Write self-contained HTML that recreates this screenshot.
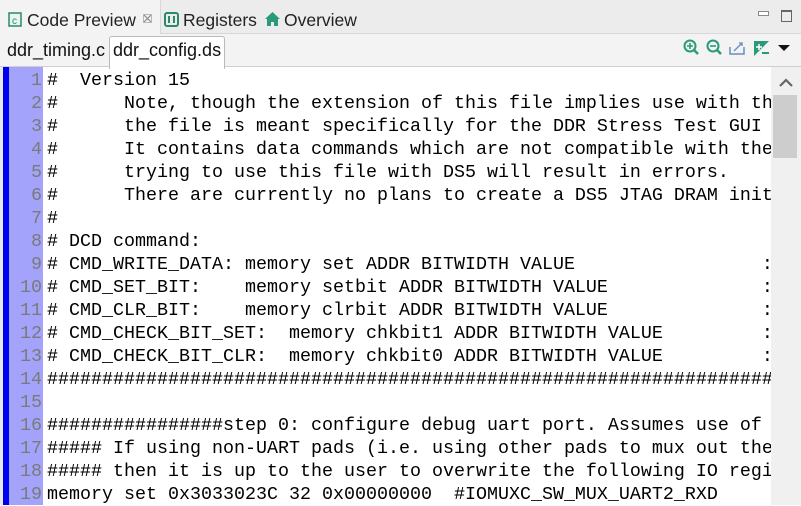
<!DOCTYPE html><html><head><style>
body{margin:0;width:801px;height:505px;overflow:hidden;background:#fff;font-family:"Liberation Sans",sans-serif;position:relative}
.top{position:absolute;left:0;top:0;width:801px;height:34px;background:#ececec;border-bottom:1px solid #d8d8d8;box-sizing:border-box}
.t1{position:absolute;top:0;left:0;height:34px;width:160px;background:#f3f3f3;border-right:1px solid #d8d8d8}
.tab{position:absolute;top:10px;font-size:17.5px;color:#222}
.bar2{position:absolute;left:0;top:34px;width:801px;height:33px;background:#f3f3f3;border-bottom:1px solid #cfcfcf;box-sizing:border-box}
.et{position:absolute;top:40px;font-size:18px;color:#111}
.gut{position:absolute;left:0;top:67px;height:438px;width:43px;background:#a3a3fb}
.gb{position:absolute;left:0;top:67px;height:438px;width:3px;background:#e8e8e8}
.gb2{position:absolute;left:3px;top:67px;height:438px;width:6px;background:#0000f0}
pre{margin:0;position:absolute;top:69px;font-family:"Liberation Mono",monospace;font-size:18.33px;line-height:23px}
.nums{left:0;width:42px;text-align:right;color:#7a7a7a}
.code{left:47px;width:724px;overflow:hidden;color:#000}
.sb{position:absolute;left:771px;top:67px;width:30px;height:438px;background:#f0f0f0}
.th{position:absolute;left:773px;top:95px;width:24px;height:63px;background:#cdcdcd}
</style></head><body>
<div class="top"><div class="t1"></div></div>
<svg style="position:absolute;left:8px;top:12px" width="14" height="15"><rect x="1" y="1" width="12" height="13" fill="#e8f4ef" stroke="#2a8a6a" stroke-width="1.5"/><text x="4" y="12" font-size="10" fill="#2a8a6a" font-family="Liberation Sans">c</text></svg>
<div class="tab" style="left:27px">Code Preview</div>
<svg style="position:absolute;left:143px;top:14px" width="9" height="9"><path d="M1 1l7 7M8 1l-7 7" stroke="#888" stroke-width="1.2"/><rect x="0.5" y="0.5" width="8" height="8" fill="none" stroke="#aaa" stroke-width="0.8"/></svg>
<svg style="position:absolute;left:164px;top:12px" width="15" height="15"><rect x="1" y="1" width="13" height="13" rx="2" fill="none" stroke="#2a8a6a" stroke-width="2"/><line x1="5" y1="4" x2="5" y2="11" stroke="#2a8a6a" stroke-width="2"/><line x1="10" y1="4" x2="10" y2="11" stroke="#2a8a6a" stroke-width="2"/></svg>
<div class="tab" style="left:183px">Registers</div>
<svg style="position:absolute;left:264px;top:11px" width="17" height="16"><path d="M8.5 1L1 8h2v7h4v-4h3v4h4V8h2z" fill="#2a9a7a"/></svg>
<div class="tab" style="left:284px">Overview</div>
<div style="position:absolute;left:758px;top:11px;width:9px;height:3px;border:1px solid #888;background:#fff"></div>
<div style="position:absolute;left:781px;top:10px;width:9px;height:9px;border:1px solid #666;border-top-width:2px"></div>
<div class="bar2"></div>
<div style="position:absolute;left:109px;top:36px;width:114px;height:32px;background:#fff;border:1px solid #bbb;border-bottom:none;border-radius:3px 3px 0 0"></div>
<div class="et" style="left:7px">ddr_timing.c</div>
<div class="et" style="left:113px">ddr_config.ds</div>
<svg style="position:absolute;left:682px;top:39px" width="118" height="18"><circle cx="8" cy="7" r="5.5" fill="none" stroke="#2a9a7a" stroke-width="2"/><line x1="12" y1="11" x2="16" y2="15" stroke="#2a9a7a" stroke-width="2.5"/><path d="M5 7h6M8 4v6" stroke="#2a9a7a" stroke-width="1.6"/><circle cx="31" cy="7" r="5.5" fill="none" stroke="#2a9a7a" stroke-width="2"/><line x1="35" y1="11" x2="39" y2="15" stroke="#2a9a7a" stroke-width="2.5"/><path d="M28 7h6" stroke="#2a9a7a" stroke-width="1.6"/><path d="M48 8v7h14V8" fill="none" stroke="#6b8cc0" stroke-width="1.5"/><path d="M52 12l8-8M57 4h3v3" fill="none" stroke="#6b8cc0" stroke-width="1.3"/><path d="M72 2h15l-15 15z" fill="#2a9a7a"/><path d="M74 8h6M77 5v6" stroke="#fff" stroke-width="1.5"/><path d="M80 14h7" stroke="#2a9a7a" stroke-width="2"/><path d="M96 6h12l-6 6z" fill="#111"/></svg>
<div class="gut"></div><div class="gb"></div><div class="gb2"></div>
<pre class="nums">1
2
3
4
5
6
7
8
9
10
11
12
13
14
15
16
17
18
19</pre>
<pre class="code">#  Version 15
#      Note, though the extension of this file implies use with the DS5
#      the file is meant specifically for the DDR Stress Test GUI
#      It contains data commands which are not compatible with the DS5
#      trying to use this file with DS5 will result in errors.
#      There are currently no plans to create a DS5 JTAG DRAM init
#
# DCD command:
# CMD_WRITE_DATA: memory set ADDR BITWIDTH VALUE                 :
# CMD_SET_BIT:    memory setbit ADDR BITWIDTH VALUE              :
# CMD_CLR_BIT:    memory clrbit ADDR BITWIDTH VALUE              :
# CMD_CHECK_BIT_SET:  memory chkbit1 ADDR BITWIDTH VALUE         :
# CMD_CHECK_BIT_CLR:  memory chkbit0 ADDR BITWIDTH VALUE         :
######################################################################

################step 0: configure debug uart port. Assumes use of UART
##### If using non-UART pads (i.e. using other pads to mux out the
##### then it is up to the user to overwrite the following IO register
memory set 0x3033023C 32 0x00000000  #IOMUXC_SW_MUX_UART2_RXD</pre>
<div class="sb"></div><div class="th"></div>
<svg style="position:absolute;left:778px;top:78px" width="16" height="10"><path d="M2 8l6-6 6 6" fill="none" stroke="#666" stroke-width="2.2"/></svg>
</body></html>
